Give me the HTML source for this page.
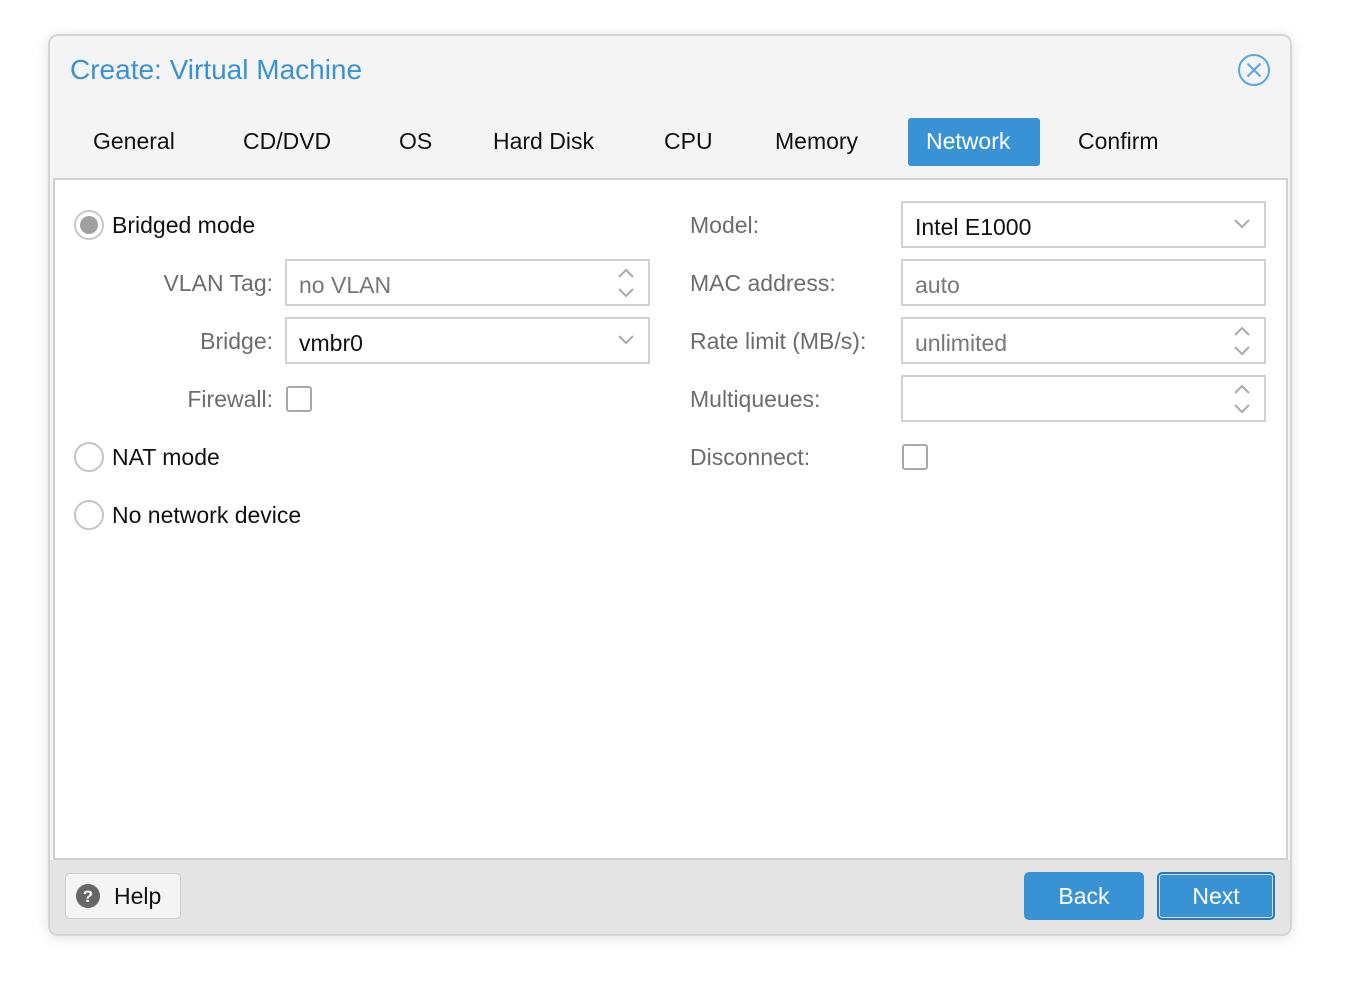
<!DOCTYPE html>
<html><head><meta charset="utf-8"><style>
*{box-sizing:border-box;margin:0;padding:0}
body{width:1370px;height:996px;background:#fff;font-family:"Liberation Sans",sans-serif;position:relative;overflow:hidden;color:#111}
.dlg{position:absolute;left:48px;top:34px;width:1244px;height:902px;background:#f4f4f4;border:2px solid #d4d4d4;border-radius:10px;box-shadow:0 2px 14px rgba(0,0,0,.12);overflow:hidden}
.a{position:absolute;white-space:nowrap}
.t{font-size:23px;line-height:26px}
.lbl{color:#6c6c6c}
.body{position:absolute;left:53px;top:178px;width:1235px;height:682px;background:#fff;border:2px solid #d0d0d0}
.foot{position:absolute;left:50px;top:860px;width:1240px;height:74px;background:#e4e4e4;border-radius:0 0 9px 9px}
.inp{position:absolute;height:47px;border:2px solid #d0d0d0;background:#fff;font-size:23px;padding:11px 12px}
.cb{position:absolute;width:26px;height:26px;border:2px solid #a8a8a8;border-radius:3px;background:#fff}
.rad{position:absolute;width:30px;height:30px;border-radius:50%;border:2px solid #c4c4c4;background:#fff}
.btn{position:absolute;background:#3892d4;color:#fff;border-radius:5px;font-size:23px;text-align:center}
svg{position:absolute}
</style></head><body>
<div class="dlg"></div>
<div class="a" style="left:70px;top:54px;font-size:28px;color:#3892d4">Create: Virtual Machine</div>
<svg style="left:1237px;top:53px" width="34" height="34" viewBox="0 0 34 34"><circle cx="17" cy="17" r="15" fill="none" stroke="#5aa6e0" stroke-width="2"/><path d="M10.5 10.5L23.5 23.5M23.5 10.5L10.5 23.5" stroke="#5aa6e0" stroke-width="2"/></svg>
<div style="position:absolute;left:908px;top:118px;width:132px;height:48px;background:#3892d4;border-radius:3px"></div>
<div class="a t" style="left:93px;top:128px">General</div>
<div class="a t" style="left:243px;top:128px">CD/DVD</div>
<div class="a t" style="left:399px;top:128px">OS</div>
<div class="a t" style="left:493px;top:128px">Hard Disk</div>
<div class="a t" style="left:664px;top:128px">CPU</div>
<div class="a t" style="left:775px;top:128px">Memory</div>
<div class="a t" style="left:926px;top:128px;color:#fff">Network</div>
<div class="a t" style="left:1078px;top:128px">Confirm</div>
<div class="body"></div>
<div class="foot"></div>

<div class="rad" style="left:74px;top:210px;border-color:#c8c8c8"><div style="position:absolute;left:4px;top:4px;width:18px;height:18px;border-radius:50%;background:#a0a0a0"></div></div>
<div class="a t" style="left:112px;top:212px">Bridged mode</div>
<div class="a t lbl" style="right:1097px;top:270px">VLAN Tag:</div>
<div class="inp" style="left:285px;top:259px;width:365px;color:#777">no VLAN</div>
<div class="a t lbl" style="right:1097px;top:328px">Bridge:</div>
<div class="inp" style="left:285px;top:317px;width:365px">vmbr0</div>
<div class="a t lbl" style="right:1097px;top:386px">Firewall:</div>
<div class="cb" style="left:286px;top:386px"></div>
<div class="rad" style="left:74px;top:442px"></div>
<div class="a t" style="left:112px;top:444px">NAT mode</div>
<div class="rad" style="left:74px;top:500px"></div>
<div class="a t" style="left:112px;top:502px">No network device</div>

<div class="a t lbl" style="left:690px;top:212px">Model:</div>
<div class="inp" style="left:901px;top:201px;width:365px">Intel E1000</div>
<div class="a t lbl" style="left:690px;top:270px">MAC address:</div>
<div class="inp" style="left:901px;top:259px;width:365px;color:#777">auto</div>
<div class="a t lbl" style="left:690px;top:328px">Rate limit (MB/s):</div>
<div class="inp" style="left:901px;top:317px;width:365px;color:#777">unlimited</div>
<div class="a t lbl" style="left:690px;top:386px">Multiqueues:</div>
<div class="inp" style="left:901px;top:375px;width:365px"></div>
<div class="a t lbl" style="left:690px;top:444px">Disconnect:</div>
<div class="cb" style="left:902px;top:444px"></div>

<svg width="20" height="40" style="left:616px;top:264px"><path d="M3 13L10 6L17 13M3 25L10 32L17 25" fill="none" stroke="#aaa" stroke-width="2"/></svg>
<svg width="20" height="20" style="left:616px;top:330px"><path d="M3 6L10 13L17 6" fill="none" stroke="#aaa" stroke-width="2"/></svg>
<svg width="20" height="20" style="left:1232px;top:214px"><path d="M3 6L10 13L17 6" fill="none" stroke="#aaa" stroke-width="2"/></svg>
<svg width="20" height="40" style="left:1232px;top:322px"><path d="M3 13L10 6L17 13M3 25L10 32L17 25" fill="none" stroke="#aaa" stroke-width="2"/></svg>
<svg width="20" height="40" style="left:1232px;top:380px"><path d="M3 13L10 6L17 13M3 25L10 32L17 25" fill="none" stroke="#aaa" stroke-width="2"/></svg>

<div style="position:absolute;left:65px;top:873px;width:116px;height:46px;background:#f4f4f4;border:1px solid #ccc;border-radius:5px"></div>
<svg width="26" height="26" style="left:75px;top:883px"><circle cx="13" cy="13" r="12" fill="#666"/><text x="13" y="19" text-anchor="middle" font-family="Liberation Sans" font-weight="bold" font-size="17" fill="#fff">?</text></svg>
<div class="a t" style="left:114px;top:883px">Help</div>
<div class="btn" style="left:1024px;top:872px;width:120px;height:48px;line-height:48px">Back</div>
<div class="btn" style="left:1157px;top:872px;width:118px;height:48px;line-height:44px;border:2px solid #2a78b8;box-shadow:inset 0 0 0 1px #cfe4f5">Next</div>
</body></html>
